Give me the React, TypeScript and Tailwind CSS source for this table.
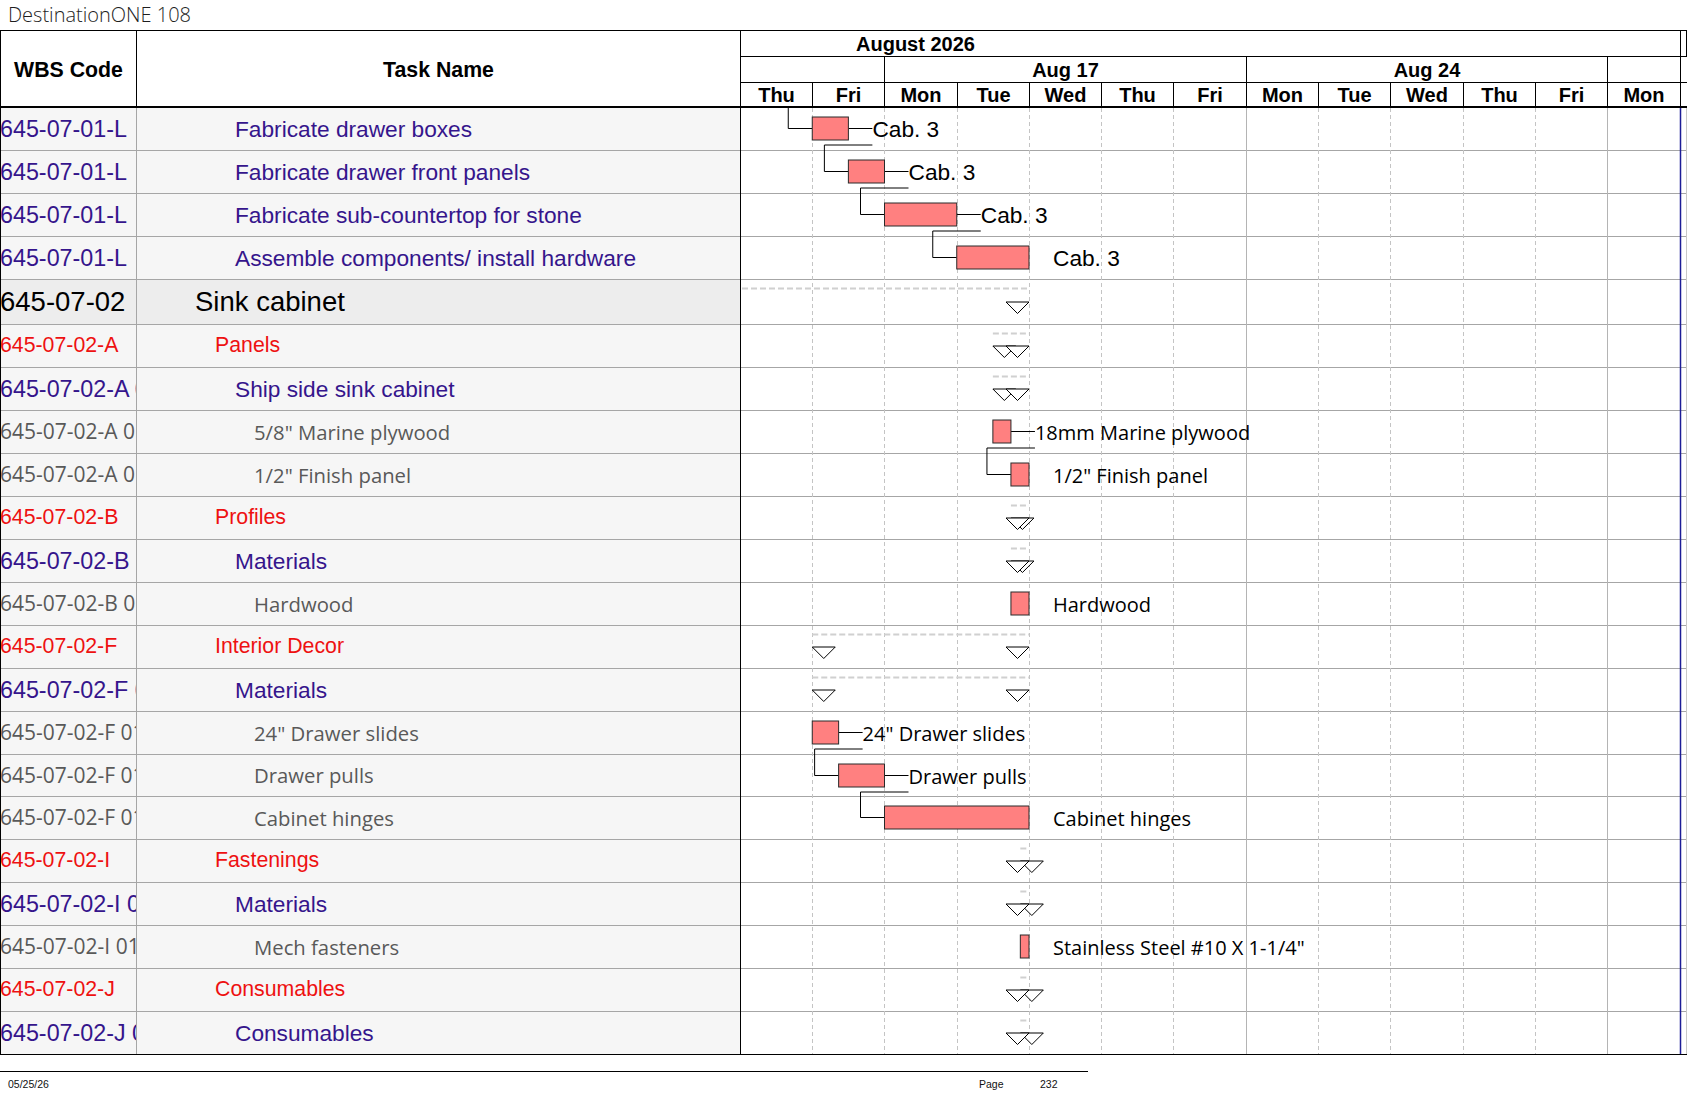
import React from 'react';

type Kind = 'task' | 'group' | 'item' | 'top';

const rows: [string, string, Kind][] = [
  ['645-07-01-L', 'Fabricate drawer boxes', 'task'],
  ['645-07-01-L', 'Fabricate drawer front panels', 'task'],
  ['645-07-01-L', 'Fabricate sub-countertop for stone', 'task'],
  ['645-07-01-L', 'Assemble components/ install hardware', 'task'],
  ['645-07-02', 'Sink cabinet', 'top'],
  ['645-07-02-A', 'Panels', 'group'],
  ['645-07-02-A 01', 'Ship side sink cabinet', 'task'],
  ['645-07-02-A 01 01', '5/8" Marine plywood', 'item'],
  ['645-07-02-A 01 02', '1/2" Finish panel', 'item'],
  ['645-07-02-B', 'Profiles', 'group'],
  ['645-07-02-B 01', 'Materials', 'task'],
  ['645-07-02-B 01 01', 'Hardwood', 'item'],
  ['645-07-02-F', 'Interior Decor', 'group'],
  ['645-07-02-F 01', 'Materials', 'task'],
  ['645-07-02-F 01 01', '24" Drawer slides', 'item'],
  ['645-07-02-F 01 02', 'Drawer pulls', 'item'],
  ['645-07-02-F 01 03', 'Cabinet hinges', 'item'],
  ['645-07-02-I', 'Fastenings', 'group'],
  ['645-07-02-I 01', 'Materials', 'task'],
  ['645-07-02-I 01 01', 'Mech fasteners', 'item'],
  ['645-07-02-J', 'Consumables', 'group'],
  ['645-07-02-J 01', 'Consumables', 'task'],
];

// row heights in px (the sink cabinet row is taller, one row is a px short)
const H = [43, 43, 43, 43, 45, 43, 43, 43, 43, 43, 43, 43, 43, 43, 43, 42, 43, 43, 43, 43, 43, 43];
const rowH: Record<number, string> = { 42: 'h-[42px]', 43: 'h-[43px]', 45: 'h-[45px]' };
const tops: number[] = [];
H.reduce((y, h) => { tops.push(y); return y + h; }, 108);

const codeCls: Record<Kind, string> = {
  task: "font-['Liberation_Sans',Arial,sans-serif] text-[23.3px] text-[#35158c]",
  group: "font-['Liberation_Sans',Arial,sans-serif] text-[21.3px] text-[#ee1111]",
  item: "font-['Open_Sans',sans-serif] text-[21px] text-[#595959]",
  top: "font-['Liberation_Sans',Arial,sans-serif] text-[27.5px] text-black",
};
const nameCls: Record<Kind, string> = {
  task: "pl-[98px] font-['Liberation_Sans',Arial,sans-serif] text-[22.7px] text-[#35158c]",
  group: "pl-[78px] font-['Liberation_Sans',Arial,sans-serif] text-[21.3px] text-[#ee1111]",
  item: "pl-[117px] font-['Open_Sans',sans-serif] text-[20.3px] text-[#595959]",
  top: "pl-[58px] font-['Liberation_Sans',Arial,sans-serif] text-[27.5px] text-black",
};

const days = ['Thu', 'Fri', 'Mon', 'Tue', 'Wed', 'Thu', 'Fri', 'Mon', 'Tue', 'Wed', 'Thu', 'Fri', 'Mon'];
const grid = [812, 884, 957, 1029, 1101, 1173, 1246, 1318, 1390, 1463, 1535, 1607];
const d = (k: number) => 740 + 72.25 * k;

const bars = [
  { r: 0, s: 1, e: 1.5, t: 'Cab. 3', f: 'a' },
  { r: 1, s: 1.5, e: 2, t: 'Cab. 3', f: 'a' },
  { r: 2, s: 2, e: 3, t: 'Cab. 3', f: 'a' },
  { r: 3, s: 3, e: 4, t: 'Cab. 3', f: 'a' },
  { r: 7, s: 3.5, e: 3.75, t: '18mm Marine plywood', f: 'o' },
  { r: 8, s: 3.75, e: 4, t: '1/2" Finish panel', f: 'o' },
  { r: 11, s: 3.75, e: 4, t: 'Hardwood', f: 'o' },
  { r: 14, s: 1, e: 1.365, t: '24" Drawer slides', f: 'o' },
  { r: 15, s: 1.365, e: 2, t: 'Drawer pulls', f: 'o' },
  { r: 16, s: 2, e: 4, t: 'Cabinet hinges', f: 'o' },
  { r: 19, s: 3.88, e: 4, t: 'Stainless Steel #10 X 1-1/4"', f: 'o' },
];
const links: [number, number][] = [[0, 1], [1, 2], [2, 3], [4, 5], [7, 8], [8, 9]]; // indexes into bars

const sums = [
  { r: 4, s: -1, e: 4 },
  { r: 5, s: 3.5, e: 4 },
  { r: 6, s: 3.5, e: 4 },
  { r: 9, s: 3.75, e: 4 },
  { r: 10, s: 3.75, e: 4 },
  { r: 12, s: 1, e: 4 },
  { r: 13, s: 1, e: 4 },
  { r: 17, s: 3.88, e: 4 },
  { r: 18, s: 3.88, e: 4 },
  { r: 20, s: 3.88, e: 4 },
  { r: 21, s: 3.88, e: 4 },
];

const tri = (x: number, y: number) => `${x},${y} ${x + 23},${y} ${x + 11.5},${y + 11.5}`;

const Chart = () => {
  const linked = new Set(links.map(([a]) => a));
  return (
    <svg className="absolute top-0 left-0" width={946} height={947} viewBox="741 108 946 947">
      {grid.map((x, i) => (
        <line
          key={i}
          x1={x + 0.5} y1={108} x2={x + 0.5} y2={1054}
          stroke={x === 1246 || x === 1607 ? '#b4b4b4' : '#c4c4c4'}
          strokeDasharray={x === 1246 || x === 1607 ? undefined : '4 3'}
        />
      ))}
      <line x1={1680.5} y1={108} x2={1680.5} y2={1054} stroke="#1c1c96" strokeWidth={1.5} />
      <line x1={1686.5} y1={108} x2={1686.5} y2={1054} stroke="#c8c8c8" />

      {/* summary bars */}
      {sums.map((s, i) => {
        const top = tops[s.r];
        const ty = top + 21 + (H[s.r] - 43) / 2;
        return (
          <g key={i}>
            <line
              x1={s.s < 0 ? 742 : d(s.s)} y1={top + 8.5} x2={d(s.e)} y2={top + 8.5}
              stroke="#d0d0d0" strokeWidth={2} strokeDasharray="6 3"
            />
            {s.s >= 0 && <polygon points={tri(d(s.s), ty)} fill="white" stroke="black" strokeWidth={1} />}
            <polygon points={tri(d(s.e) - 23, ty)} fill="white" stroke="black" strokeWidth={1} />
          </g>
        );
      })}

      {/* incoming link into first task */}
      <polyline points={`${d(1) - 24},108 ${d(1) - 24},${tops[0] + 20.5} ${d(1)},${tops[0] + 20.5}`} fill="none" stroke="black" />

      {links.map(([a, b], i) => {
        const A = bars[a];
        const B = bars[b];
        const lx = d(A.e) + 24;
        const y1 = tops[A.r] + 37;
        const vx = d(B.s) - 24;
        const y2 = tops[B.r] + 20.5;
        return (
          <polyline key={i} points={`${lx},${y1} ${vx},${y1} ${vx},${y2} ${d(B.s)},${y2}`} fill="none" stroke="black" />
        );
      })}

      {bars.map((b, i) => {
        const top = tops[b.r];
        const x1 = d(b.s);
        const x2 = d(b.e);
        return (
          <g key={i}>
            {linked.has(i) && <line x1={x2} y1={top + 20.5} x2={x2 + 24} y2={top + 20.5} stroke="black" />}
            <rect x={x1} y={top + 9} width={x2 - x1} height={23} fill="#ff8080" stroke="#2a2a2a" strokeWidth={1} />
            <text
              x={x2 + 24}
              y={top + 28.5}
              fill="black"
              fontFamily={b.f === 'a' ? "'Liberation Sans', Arial, sans-serif" : "'Open Sans', sans-serif"}
              fontSize={b.f === 'a' ? 22.7 : 20}
            >
              {b.t}
            </text>
          </g>
        );
      })}
    </svg>
  );
};

export default function App() {
  return (
    <div className="w-[1687px] h-[1097px] bg-white overflow-hidden font-['Liberation_Sans',Arial,sans-serif] text-black">
      <div className="h-[30px] pl-[8px] flex items-center font-['Open_Sans',sans-serif] font-light text-[20px] leading-[24px] text-[#1e1e1e]">
        DestinationONE 108
      </div>

      <div className="flex w-[1687px] border-t border-black">
        {/* task table */}
        <div className="w-[741px] shrink-0 border-l border-r border-black flex flex-col">
          <div className="h-[77px] flex border-b-2 border-black font-bold text-[21.3px] leading-[24px] bg-white">
            <div className="w-[136px] border-r border-black flex items-center justify-center pt-[2px]">WBS Code</div>
            <div className="flex-1 flex items-center justify-center pt-[2px]">Task Name</div>
          </div>
          {rows.map(([code, name, kind], i) => (
            <div
              key={i}
              className={`${rowH[H[i]]} flex border-b ${i === rows.length - 1 ? 'border-black' : 'border-[#a6a6a6]'} ${kind === 'top' ? 'bg-[#ededed]' : 'bg-[#f6f6f6]'}`}
            >
              <div className={`w-[136px] shrink-0 border-r border-[#a6a6a6] overflow-hidden whitespace-nowrap flex items-center ${codeCls[kind]}`}>
                <span className="ml-[-1px]">{code}</span>
              </div>
              <div className={`flex-1 overflow-hidden whitespace-nowrap flex items-center ${nameCls[kind]}`}>
                {name}
              </div>
            </div>
          ))}
        </div>

        {/* gantt */}
        <div className="w-[946px] shrink-0 flex flex-col">
          <div className="h-[77px] flex flex-col font-bold text-[20px] leading-[22px]">
            <div className="h-[26px] flex border-b border-black">
              <div className="w-[940px] border-r border-black pl-[115px] pt-[2px]">August 2026</div>
              <div className="flex-1 border-r border-black" />
            </div>
            <div className="h-[26px] grid grid-cols-[144px_362px_361px_73px_6px] grid-rows-[25px] border-b border-black">
              <div className="border-r border-black" />
              <div className="border-r border-black flex items-center justify-center">Aug 17</div>
              <div className="border-r border-black flex items-center justify-center">Aug 24</div>
              <div className="border-r border-black" />
              <div />
            </div>
            <div className="h-[25px] grid grid-cols-[72px_72px_73px_72px_72px_72px_73px_72px_72px_73px_72px_72px_73px_6px] grid-rows-[23px] border-b-2 border-black">
              {days.map((dd, i) => (
                <div key={i} className="border-r border-black flex items-center justify-center">{dd}</div>
              ))}
              <div />
            </div>
          </div>
          <div className="relative h-[947px]">
            {rows.map((_, i) => (
              <div key={i} className={`${rowH[H[i]]} border-b ${i === rows.length - 1 ? 'border-black' : 'border-[#a6a6a6]'}`} />
            ))}
            <Chart />
          </div>
        </div>
      </div>

      <div className="mt-[16px] w-[1088px] border-t border-black flex pt-[6px] text-[10.5px] leading-[12px] text-[#111]">
        <span className="w-[979px] pl-[8px]">05/25/26</span>
        <span className="w-[61px]">Page</span>
        <span>232</span>
      </div>
    </div>
  );
}
